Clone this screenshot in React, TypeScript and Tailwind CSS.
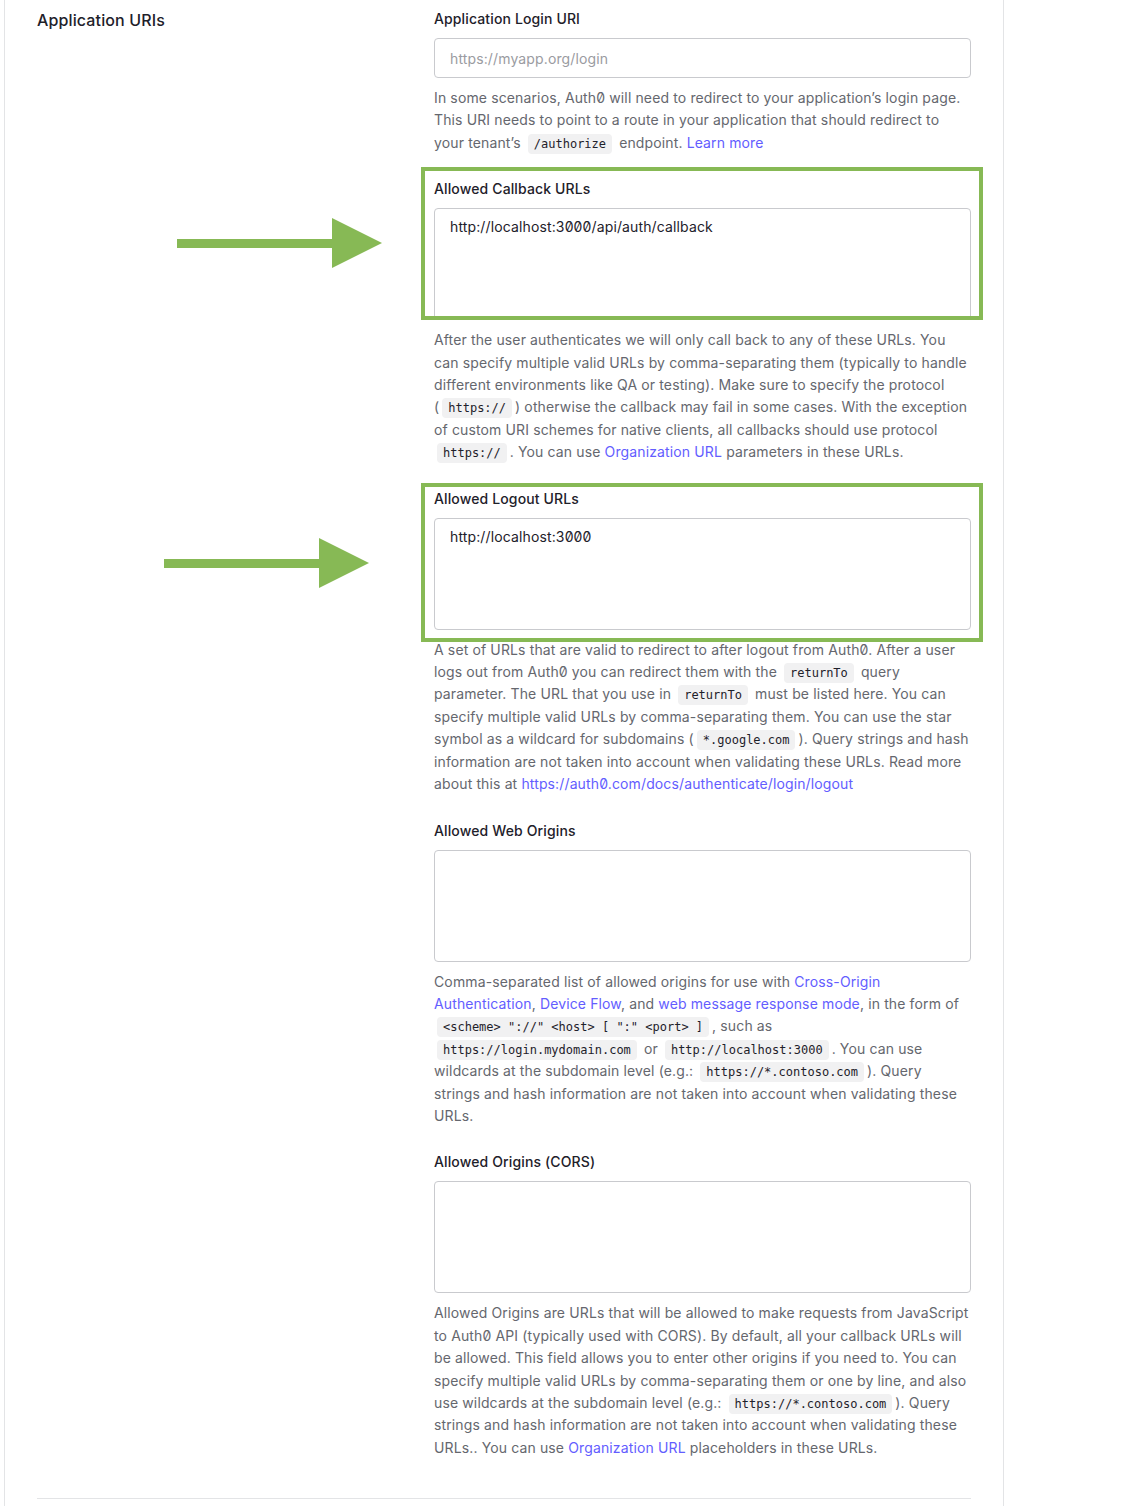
import React from "react";

const Code = ({ children }: { children: React.ReactNode }) => (
  <code className="mx-[3px] whitespace-nowrap rounded-[4px] bg-[#f1f1f2] px-[6px] py-[3px] font-['DejaVu_Sans_Mono',monospace] text-[12px] leading-[14px] tracking-normal text-[#1e212a]">
    {children}
  </code>
);

const A = ({ children }: { children: React.ReactNode }) => (
  <a className="text-[#635dff]">{children}</a>
);

const Label = ({ children }: { children: React.ReactNode }) => (
  <label className="mb-[9px] block text-[14px] font-medium leading-[20px] text-[#1e212a]">{children}</label>
);

const Desc = ({ children }: { children: React.ReactNode }) => (
  <p className="mt-[9px] text-[14px] leading-[22.4px] text-[#65676e]">{children}</p>
);

const Area = ({ value }: { value?: string }) => (
  <div className="h-[112px] w-full rounded-[4px] border border-[#c9cace] bg-white px-[15px] pt-[8px] text-[14px] leading-[20px] text-[#1e212a]">
    {value}
  </div>
);

const Arrow = ({ left, top }: { left: number; top: number }) => (
  <svg
    className="absolute"
    style={{ left, top }}
    width="205"
    height="50"
    viewBox="0 0 205 50"
  >
    <rect x="0" y="21" width="157" height="9" fill="#87b955" />
    <polygon points="155,0 205,25 155,50" fill="#87b955" />
  </svg>
);

export default function App() {
  return (
    <div className="relative min-h-[1506px] bg-white font-['Inter',sans-serif] tracking-[0.13px] slashed-zero">
      <div className="ml-[4px] min-h-[1506px] w-[1000px] border-x border-[#e3e4e6] px-8">
        <div className="flex pt-[9px]">
          <div className="w-[397px]">
            <h2 className="text-[16px] font-medium leading-[22px] text-[#1e212a]">Application URIs</h2>
          </div>
          <div className="flex w-[537px] flex-col gap-[25px]">
            <div>
              <Label>Application Login URI</Label>
              <div className="flex h-[40px] items-center rounded-[4px] border border-[#c9cace] px-[15px] text-[14px] text-[#9a9ba1]">
                https://myapp.org/login
              </div>
              <Desc>
                In some scenarios, Auth0 will need to redirect to your application’s login page. This URI needs to
                point to a route in your application that should redirect to your tenant’s <Code>/authorize</Code>{" "}
                endpoint. <A>Learn more</A>
              </Desc>
            </div>
            <div>
              <Label>Allowed Callback URLs</Label>
              <Area value="http://localhost:3000/api/auth/callback" />
              <Desc>
                After the user authenticates we will only call back to any of these URLs. You can specify multiple
                valid URLs by comma-separating them (typically to handle different environments like QA or testing).
                Make sure to specify the protocol (<Code>https://</Code>) otherwise the callback may fail in some
                cases. With the exception of custom URI schemes for native clients, all callbacks should use protocol{" "}
                <Code>https://</Code>. You can use <A>Organization URL</A> parameters in these URLs.
              </Desc>
            </div>
            <div>
              <Label>Allowed Logout URLs</Label>
              <Area value="http://localhost:3000" />
              <Desc>
                A set of URLs that are valid to redirect to after logout from Auth0. After a user logs out from Auth0
                you can redirect them with the <Code>returnTo</Code> query parameter. The URL that you use in{" "}
                <Code>returnTo</Code> must be listed here. You can specify multiple valid URLs by comma-separating
                them. You can use the star symbol as a wildcard for subdomains (<Code>*.google.com</Code>). Query
                strings and hash information are not taken into account when validating these URLs. Read more about
                this at <A>https://auth0.com/docs/authenticate/login/logout</A>
              </Desc>
            </div>
            <div>
              <Label>Allowed Web Origins</Label>
              <Area />
              <Desc>
                Comma-separated list of allowed origins for use with <A>Cross-Origin Authentication</A>,{" "}
                <A>Device Flow</A>, and <A>web message response mode</A>, in the form of{" "}
                <Code>{'<scheme> "://" <host> [ ":" <port> ]'}</Code>, such as{" "}
                <Code>https://login.mydomain.com</Code> or <Code>http://localhost:3000</Code>. You can use wildcards
                at the subdomain level (e.g.: <Code>https://*.contoso.com</Code>). Query
                <br />
                strings and hash information are not taken into account when validating these URLs.
              </Desc>
            </div>
            <div>
              <Label>Allowed Origins (CORS)</Label>
              <Area />
              <Desc>
                Allowed Origins are URLs that will be allowed to make requests from JavaScript to Auth0 API
                (typically used with CORS). By default, all your callback URLs will be allowed. This field allows you
                to enter other origins if you need to. You can specify multiple valid URLs by comma-separating them or
                one by line, and also use wildcards at the subdomain level (e.g.: <Code>https://*.contoso.com</Code>).
                Query strings and hash information are not taken into account when validating these URLs.. You can
                use <A>Organization URL</A> placeholders in these URLs.
              </Desc>
            </div>
          </div>
        </div>
        <div className="mt-[39px] border-t border-[#e3e4e6]" />
      </div>

      <div className="absolute left-[421px] top-[167px] h-[153px] w-[562px] border-4 border-[#87b955]" />
      <div className="absolute left-[421px] top-[483px] h-[159px] w-[562px] border-4 border-[#87b955]" />
      <Arrow left={177} top={218} />
      <Arrow left={164} top={538} />
    </div>
  );
}
